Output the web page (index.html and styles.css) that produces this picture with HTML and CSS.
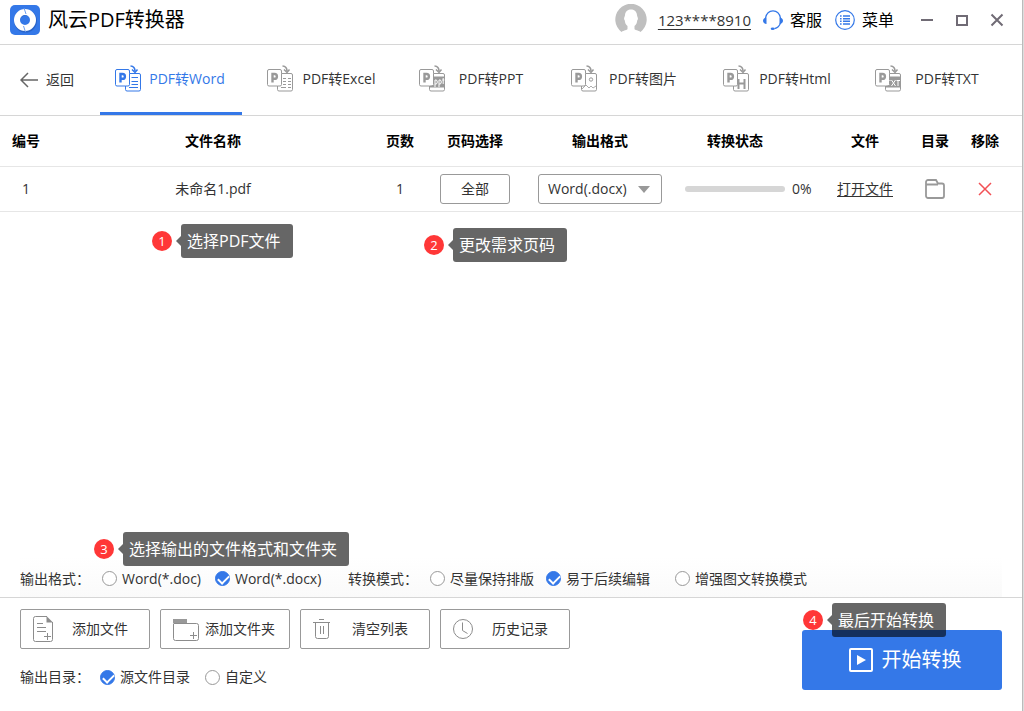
FILE: index.html
```html
<!DOCTYPE html>
<html lang="zh-CN">
<head>
<meta charset="utf-8">
<meta name="viewport" content="width=device-width, initial-scale=1">
<title>风云PDF转换器</title>
<link rel="stylesheet" href="styles.css">
</head>
<body>
<svg class="sprite" aria-hidden="true">
  <defs>
    <symbol id="pdf-page" viewBox="0 0 26 27">
      <path d="M14.5 8.5V6a1.500 1.500 0 0 0-1.500-1.500H2A1.500 1.500 0 0 0 .5 6v13.500A1.500 1.500 0 0 0 2 21h8.500" fill="none" stroke="currentColor"/>
      <path d="M14.500 8.500H24a1.500 1.500 0 0 1 1.500 1.500v14.500a1.500 1.500 0 0 1-1.500 1.500H12a1.500 1.500 0 0 1-1.500-1.500V21h2.500a1.500 1.500 0 0 0 1.500-1.500z" fill="none" stroke="currentColor"/>
      <path d="M5.500 17.500V9h2a2.200 2.200 0 0 1 0 4.800h-2" fill="none" stroke="currentColor" stroke-width="2.400"/>
      <path d="M15.500 1c3 .2 4.500 2 4.500 5" fill="none" stroke="currentColor" stroke-width="1.600"/>
      <path d="M17 4.500l3 3 2.500-3" fill="none" stroke="currentColor" stroke-width="1.500"/>
    </symbol>
  </defs>
</svg>
<div class="window">
  <header class="titlebar">
    <svg class="logo" viewBox="0 0 30 30" aria-hidden="true">
      <rect width="30" height="30" rx="5" fill="#3478e8"/>
      <circle cx="15.500" cy="16" r="8.500" fill="none" stroke="#2863c8" stroke-width="6"/>
      <circle cx="15" cy="15" r="8" fill="none" stroke="#fff" stroke-width="6"/>
      <path d="M14 3l2 6M13.500 21l2 6" stroke="#6d9eee" stroke-width="1"/>
    </svg>
    <h1 class="app-name">风云PDF转换器</h1>
    <svg class="avatar" viewBox="0 0 32 32" aria-hidden="true">
      <path d="M6.500 28A15.700 15.700 0 1 1 25.500 28C23 26 20 26.500 19.500 25v-3c2-1.500 2.500-3.500 2.700-5.500C24 14 22 13 22 11c-.5-4-3-5.500-6-5.500S10.500 7 10 11c0 2-2 3 -.2 5.500.2 2 .7 4 2.700 5.500v3c-.5 1.500-3.500 1-6 3z" fill="#bfbfbf"/>
    </svg>
    <a class="account" href="#">123****8910</a>
    <button class="title-action" type="button">
      <svg viewBox="0 0 20 20" width="20" height="20" aria-hidden="true">
        <path d="M2.500 8C3.500 3 6.500 .8 10 .8S16.500 3 17.500 8M17.500 13c-1 3-3 5-6 5.700" fill="none" stroke="#3478e8" stroke-width="1.200"/>
        <path d="M3.500 7.500v6.500C1.500 14 0 12.700 0 10.800s1.500-3.300 3.500-3.300zM16.500 7.500v6.500c2 0 3.500-1.300 3.500-3.200s-1.500-3.300-3.500-3.300z" fill="#3478e8"/>
        <ellipse cx="9.700" cy="18.700" rx="2" ry="1.200" fill="#3478e8"/>
      </svg>客服</button>
    <button class="title-action" type="button">
      <svg viewBox="0 0 20 20" width="20" height="20" aria-hidden="true">
        <circle cx="10" cy="10" r="9.300" fill="none" stroke="#3478e8" stroke-width="1.200"/>
        <path d="M8 6h7M8 8.700h7M8 11.300h7M8 14h7" stroke="#3478e8" stroke-width="1.400"/>
        <path d="M5 6h1.600M5 8.700h1.600M5 11.300h1.600M5 14h1.600" stroke="#3478e8" stroke-width="1.400"/>
      </svg>菜单</button>
    <div class="window-controls">
      <button type="button" aria-label="最小化"><svg viewBox="0 0 14 14" width="14" height="14"><path d="M1 7h12" stroke="#706b75" stroke-width="2"/></svg></button>
      <button type="button" aria-label="最大化"><svg viewBox="0 0 14 14" width="14" height="14"><rect x="2" y="3" width="10" height="9" fill="none" stroke="#706b75" stroke-width="2"/></svg></button>
      <button type="button" aria-label="关闭"><svg viewBox="0 0 14 14" width="14" height="14"><path d="M1.500 1.500l11 11M12.500 1.500l-11 11" stroke="#706b75" stroke-width="2"/></svg></button>
    </div>
  </header>

  <nav class="tabs">
    <button class="back" type="button">
      <svg viewBox="0 0 18 16" width="18" height="16" aria-hidden="true"><path d="M18 8H1M8 1L1 8l7 7" fill="none" stroke="#666" stroke-width="1.500"/></svg>返回</button>
    <button class="tab active" type="button">
      <svg viewBox="0 0 26 27" aria-hidden="true"><use href="#pdf-page"/><path d="M16.500 12.500H23M16.500 16.500H23M16.500 19.500H23M14 22.500h9" stroke="currentColor"/></svg>
      <span>PDF转Word</span></button>
    <button class="tab" type="button">
      <svg viewBox="0 0 26 27" aria-hidden="true"><use href="#pdf-page"/><path d="M16 13.500h3m2 0h3M16 16.500h3m2 0h3M16 19.500h3m2 0h3M14 22.500h5m2 0h3" stroke="currentColor"/></svg>
      <span>PDF转Excel</span></button>
    <button class="tab" type="button">
      <svg viewBox="0 0 26 27" aria-hidden="true"><use href="#pdf-page"/><path d="M15 11.500h10.500v11H11V21l4-1z" fill="currentColor"/><path d="M13 18v1M16 22v-7h1.500q1.800 2 0 4H16M20 22v-7h1.500q1.800 2 0 4H20M24.200 13v6M23.300 15h2" fill="none" stroke="#fff"/></svg>
      <span>PDF转PPT</span></button>
    <button class="tab" type="button">
      <svg viewBox="0 0 26 27" aria-hidden="true"><use href="#pdf-page"/><circle cx="20" cy="14.500" r="1.700" fill="none" stroke="currentColor"/><path d="M11 24l4-4 3 3 2-2 2 2 3-2" fill="none" stroke="currentColor" stroke-width=".8"/></svg>
      <span>PDF转图片</span></button>
    <button class="tab" type="button">
      <svg viewBox="0 0 26 27" aria-hidden="true"><use href="#pdf-page"/><path d="M15.500 14v10M21.500 14v10M15.500 18.500h6" stroke="currentColor" stroke-width="2"/></svg>
      <span>PDF转Html</span></button>
    <button class="tab" type="button">
      <svg viewBox="0 0 26 27" aria-hidden="true"><use href="#pdf-page"/><path d="M15 11.500h10.500v11H11V21l4-1z" fill="currentColor"/><path d="M14.500 15.500h1M16.500 15l4 6m0-6l-4 6M21.500 15.500H25m-2 0V21" fill="none" stroke="#fff"/></svg>
      <span>PDF转TXT</span></button>
  </nav>

  <main class="files">
    <table class="file-table">
      <colgroup><col class="c-index"><col><col class="c-pages"><col class="c-range"><col class="c-format"><col class="c-status"><col class="c-file"><col class="c-folder"><col class="c-remove"></colgroup>
      <thead>
        <tr><th>编号</th><th>文件名称</th><th>页数</th><th>页码选择</th><th>输出格式</th><th class="status-head">转换状态</th><th>文件</th><th>目录</th><th class="last">移除</th></tr>
      </thead>
      <tbody>
        <tr>
          <td>1</td>
          <td>未命名1.pdf</td>
          <td>1</td>
          <td><button class="range" type="button">全部</button></td>
          <td><div class="select-wrap"><select class="format" aria-label="输出格式"><option>Word(.docx)</option><option>Word(.doc)</option></select></div></td>
          <td><div class="status"><div class="track" role="progressbar" aria-label="转换状态" aria-valuenow="0" aria-valuemin="0" aria-valuemax="100"></div>0%</div></td>
          <td><a class="open-link" href="#">打开文件</a></td>
          <td><button class="icon-button" type="button" aria-label="打开目录"><svg viewBox="0 0 20 20" width="20" height="20"><path d="M1 6.500V3a2 2 0 0 1 2-2h8l2 3.500h4A2 2 0 0 1 19 6.500V17a2 2 0 0 1-2 2H3a2 2 0 0 1-2-2zM1 5.500h12" fill="none" stroke="#999" stroke-width="1.800"/></svg></button></td>
          <td class="last"><button class="icon-button" type="button" aria-label="移除"><svg viewBox="0 0 14 14" width="14" height="14"><path d="M1 1l12 12M13 1L1 13" stroke="#f25055" stroke-width="1.500"/></svg></button></td>
        </tr>
      </tbody>
    </table>
    <div class="hint hint-file"><b>1</b><span>选择PDF文件</span></div>
    <div class="hint hint-range"><b>2</b><span>更改需求页码</span></div>
  </main>

  <section class="options">
    <div class="group group-format" role="radiogroup" aria-labelledby="format-label">
      <span id="format-label">输出格式：</span>
      <label><input type="radio" name="format">Word(*.doc)</label>
      <label><input type="radio" name="format" checked>Word(*.docx)</label>
    </div>
    <div class="group group-mode" role="radiogroup" aria-labelledby="mode-label">
      <span id="mode-label">转换模式：</span>
      <label><input type="radio" name="mode">尽量保持排版</label>
      <label><input type="radio" name="mode" checked>易于后续编辑</label>
      <label><input type="radio" name="mode">增强图文转换模式</label>
    </div>
    <div class="hint hint-output"><b>3</b><span>选择输出的文件格式和文件夹</span></div>
  </section>

  <footer class="footer">
    <div class="footer-left">
      <div class="actions">
        <button class="action" type="button"><svg viewBox="0 0 26 26" aria-hidden="true"><path d="M14 .5H2.500a2 2 0 0 0-2 2v21a2 2 0 0 0 2 2h15a2 2 0 0 0 2-2V6M4 7.500h6M4 11.500h9M4 15.500h9M11 20.500h7M14.500 17v7" fill="none" stroke="#8c8c8c"/><path d="M13.500 0L20 6.500h-6.500z" fill="#8c8c8c"/></svg><span>添加文件</span></button>
        <button class="action" type="button"><svg viewBox="0 0 26 26" aria-hidden="true"><path d="M.5 8v14.500a2 2 0 0 0 2 2h21a2 2 0 0 0 2-2v-13a2 2 0 0 0-2-2H.5M17 19.500h7M20.500 16v7" fill="none" stroke="#8c8c8c"/><path d="M0 3h14v4H0z" fill="#999"/></svg><span>添加文件夹</span></button>
        <button class="action" type="button"><svg viewBox="0 0 26 26" aria-hidden="true"><path d="M6 3.500h5M0 6.500h17M2.500 6.500v14a2 2 0 0 0 2 2h9a2 2 0 0 0 2-2v-14M7.500 10v8M10.500 10v8" fill="none" stroke="#8c8c8c"/></svg><span>清空列表</span></button>
        <button class="action" type="button"><svg viewBox="0 0 26 26" aria-hidden="true"><circle cx="10" cy="13" r="9.500" fill="none" stroke="#8c8c8c"/><path d="M9.500 6.500v8l5 3" fill="none" stroke="#8c8c8c"/></svg><span>历史记录</span></button>
      </div>
      <div class="group group-folder" role="radiogroup" aria-labelledby="folder-label">
        <span id="folder-label">输出目录：</span>
        <label><input type="radio" name="folder" checked>源文件目录</label>
        <label><input type="radio" name="folder">自定义</label>
      </div>
    </div>
    <div class="start-wrap">
      <button class="start" type="button"><svg viewBox="0 0 24 24" width="24" height="24" aria-hidden="true"><rect x="1" y="1" width="22" height="22" rx="1" fill="none" stroke="#fff" stroke-width="2"/><path d="M8 7l9 5-9 5z" fill="#fff"/></svg>开始转换</button>
      <div class="hint hint-start"><b>4</b><span>最后开始转换</span></div>
    </div>
  </footer>
</div>
</body>
</html>
```
FILE: styles.css
```css
* { box-sizing: border-box; }

body {
  margin: 0;
  background: #ddd;
  color: #333;
  font: 14px/20px "Open Sans", "Noto Sans CJK SC", sans-serif;
}

button, select, input {
  margin: 0;
  padding: 0;
  border: 0;
  background: none;
  color: inherit;
  font: inherit;
}

svg { display: block; flex: none; }
.sprite { position: absolute; width: 0; height: 0; }

.window {
  display: flex;
  flex-direction: column;
  min-height: 100vh;
  margin-right: 1px;
  border-right: 1px solid #bbb;
  background: #fff;
}

/* Title bar */
.titlebar {
  display: flex;
  align-items: center;
  height: 45px;
  padding: 0 18px 4px 10px;
  border-bottom: 1px solid #d6d6d6;
}
.logo { width: 30px; height: 30px; }
.app-name {
  margin: 0 auto 0 8px;
  color: #000;
  font-size: 20px;
  font-weight: 400;
  line-height: 30px;
}
.avatar { width: 32px; height: 32px; }
.account {
  margin: 0 12px 0 11px;
  color: #333;
  font-size: 15px;
  text-underline-offset: 3px;
}
.title-action {
  display: flex;
  align-items: center;
  gap: 7px;
  margin-right: 13px;
  color: #000;
  font-size: 16px;
}
.window-controls { display: flex; gap: 21px; margin-left: 13px; }

/* Converter tabs */
.tabs {
  display: flex;
  gap: 10px;
  height: 71px;
  border-bottom: 1px solid #d6d6d6;
}
.back {
  display: flex;
  align-items: center;
  gap: 8px;
  width: 90px;
  padding-left: 20px;
}
.tab {
  display: flex;
  align-items: center;
  width: 142px;
  padding: 0 9px 0 15px;
  border-bottom: 3px solid transparent;
}
.tab svg { width: 26px; height: 27px; color: #999; }
.tab span { flex: 1; text-align: center; white-space: nowrap; }
.tab.active { border-color: #3478e8; color: #3478e8; }
.tab.active svg { color: #3478e8; }

/* File list */
.files { position: relative; flex: 1; }
.file-table { width: 100%; border-spacing: 0; table-layout: fixed; }
.file-table th, .file-table td { padding: 0; text-align: center; border-bottom: 1px solid #e6e6e6; }
.file-table th { height: 51px; color: #000; font-weight: 700; }
.file-table td { height: 45px; }
.file-table .last { padding-right: 12px; }
.file-table .status-head { padding-right: 26px; }
.c-index, .c-pages { width: 52px; }
.c-range { width: 98px; }
.c-format { width: 152px; }
.c-status { width: 144px; }
.c-file { width: 90px; }
.c-folder { width: 50px; }
.c-remove { width: 62px; }
.range { width: 70px; height: 30px; border: 1px solid #999; border-radius: 3px; vertical-align: middle; }
.select-wrap { position: relative; width: 124px; margin: 0 auto; }
.select-wrap::after {
  content: "";
  position: absolute;
  top: 12px;
  right: 12px;
  border: 6px solid transparent;
  border-top: 7px solid #999;
  border-bottom: 0;
  pointer-events: none;
}
.format {
  display: block;
  appearance: none;
  width: 100%;
  height: 30px;
  padding: 0 9px;
  border: 1px solid #999;
  border-radius: 3px;
}
.status { display: flex; align-items: center; gap: 7px; padding-left: 9px; }
.track { width: 100px; height: 6px; border-radius: 3px; background: #d6d6d6; }
.open-link { color: #333; text-underline-offset: 2px; }
.icon-button { display: block; margin: 0 auto; }

/* Radio groups */
.group { display: grid; align-items: center; white-space: nowrap; }
.group label { display: flex; align-items: center; gap: 5px; }
.group-format { grid-template-columns: 82px 113px 133px; }
.group-mode { grid-template-columns: 82px 116px 129px auto; }
.group-folder { grid-template-columns: 80px 105px auto; }
input[type="radio"] {
  position: relative;
  appearance: none;
  width: 15px;
  height: 15px;
  border: 1px solid #999;
  border-radius: 50%;
  background: #fff;
}
input[type="radio"]:checked { border-color: #3478e8; background: #3478e8; }
input[type="radio"]:checked::after {
  content: "";
  position: absolute;
  top: 3px;
  left: 2px;
  width: 9px;
  height: 5px;
  border: solid #fff;
  border-width: 0 0 2px 2px;
  transform: rotate(-45deg);
}
.options {
  position: relative;
  display: flex;
  height: 40px;
  margin: 0 20px;
  padding-top: 3px;
  background: linear-gradient(#fff, #fafafa);
}

/* Footer */
.footer {
  display: flex;
  justify-content: space-between;
  align-items: flex-end;
  padding: 11px 20px 21px;
  border-top: 1px solid #d6d6d6;
}
.footer-left { display: grid; gap: 18px; padding-bottom: 3px; }
.actions { display: flex; gap: 10px; }
.action {
  display: flex;
  align-items: center;
  width: 130px;
  height: 40px;
  padding: 0 8px 0 12px;
  border: 1px solid #999;
  border-radius: 2px;
}
.action svg { width: 26px; height: 26px; }
.action span { flex: 1; text-align: center; white-space: nowrap; }
.start-wrap { position: relative; }
.start {
  display: flex;
  justify-content: center;
  align-items: center;
  gap: 9px;
  width: 200px;
  height: 60px;
  padding-left: 6px;
  border-radius: 3px;
  background: #3478e8;
  color: #fff;
  font-size: 20px;
}

/* Step hints */
.hint { position: absolute; z-index: 1; display: flex; align-items: center; gap: 9px; white-space: nowrap; }
.hint b {
  width: 20px;
  height: 20px;
  border-radius: 50%;
  background: #ff3737;
  color: #fff;
  font-size: 13px;
  font-weight: 400;
  text-align: center;
}
.hint span {
  position: relative;
  height: 34px;
  padding: 0 12px 0 6px;
  border-radius: 3px;
  background: rgba(0, 0, 0, .6);
  color: #fff;
  font-size: 16px;
  line-height: 34px;
}
.hint span::before {
  content: "";
  position: absolute;
  top: 12px;
  right: 100%;
  border: 5px solid transparent;
  border-right-color: rgba(0, 0, 0, .6);
  border-left: 0;
}
.hint-file { top: 108px; left: 152px; }
.hint-range { top: 112px; left: 424px; }
.hint-output { bottom: 31px; left: 74px; }
.hint-start { bottom: 53px; left: 1px; }
```
